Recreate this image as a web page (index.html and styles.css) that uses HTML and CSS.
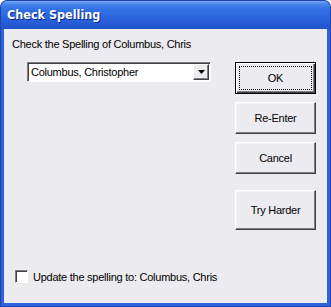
FILE: index.html
```html
<!DOCTYPE html>
<html>
<head>
<meta charset="utf-8">
<link rel="stylesheet" href="styles.css">
</head>
<body>
<div class="window">
  <div class="titlebar"><span class="title">Check Spelling</span></div>
  <div class="frame">
    <div class="content">
      <div class="left">
        <div class="prompt">Check the Spelling of Columbus, Chris</div>
        <div class="combo">
          <span class="combo-text">Columbus, Christopher</span>
          <span class="combo-btn"><svg width="7" height="4" viewBox="0 0 7 4"><path d="M0 0H7L3.5 4Z" fill="#000"/></svg></span>
        </div>
        <label class="check">
          <span class="box"></span>
          <span class="check-label">Update the spelling to: Columbus, Chris</span>
        </label>
      </div>
      <div class="buttons">
        <button class="btn default"><span class="focus">OK</span></button>
        <button class="btn">Re-Enter</button>
        <button class="btn">Cancel</button>
        <button class="btn tall">Try Harder</button>
      </div>
    </div>
  </div>
</div>
</body>
</html>
```
FILE: styles.css
```css
html, body {
  margin: 0;
  padding: 0;
  background: #ffffff;
}
.window {
  width: 331px;
  height: 307px;
  display: flex;
  flex-direction: column;
  font-family: "Liberation Sans", Arial, sans-serif;
  font-size: 11px;
  letter-spacing: -0.25px;
  color: #000;
  white-space: nowrap;
}
.titlebar {
  height: 29px;
  box-sizing: border-box;
  border-radius: 7px 7px 0 0;
  background: linear-gradient(to bottom, #7aaaf4 0px, #4a88ec 3px, #3272e4 8px, #2a62dc 18px, #2456d0 26px, #2050c8 29px);
  border: 1px solid #1d43b0;
  border-bottom: none;
  display: flex;
  align-items: center;
  padding-left: 6px;
}
.title {
  color: #fff;
  font-family: "DejaVu Sans Condensed", "DejaVu Sans", sans-serif;
  font-weight: bold;
  font-size: 12.5px;
  letter-spacing: 0;
  text-shadow: 1px 1px 0 #0f2a80;
  margin-top: -1px;
}
.frame {
  flex: 1;
  background: #2f62dc;
  border-left: 1px solid #1d43b0;
  border-right: 1px solid #1d43b0;
  border-bottom: 1px solid #1d43b0;
  padding: 0 3px 3px 3px;
  display: flex;
}
.content {
  flex: 1;
  background: #ecebef;
  display: flex;
  justify-content: space-between;
}
.left {
  display: flex;
  flex-direction: column;
  padding: 8px 0 0 8px;
}
.prompt {
  line-height: 14px;
  height: 14px;
}
.combo {
  margin: 11px 0 0 15px;
  width: 184px;
  height: 20px;
  box-sizing: border-box;
  border: 1px solid;
  border-color: #808080 #ffffff #ffffff #808080;
  box-shadow: inset 1px 1px 0 #404040;
  background: #fff;
  display: flex;
  align-items: center;
  justify-content: space-between;
}
.combo-text {
  padding-left: 3px;
  line-height: 16px;
}
.combo-btn {
  width: 16px;
  height: 16px;
  margin-right: 1px;
  box-sizing: border-box;
  background: #ecebef;
  border: 1px solid;
  border-color: #ffffff #404040 #404040 #ffffff;
  box-shadow: inset -1px -1px 0 #808080;
  display: flex;
  align-items: center;
  justify-content: center;
}
.check {
  margin-top: auto;
  margin-bottom: 20px;
  margin-left: 3px;
  display: flex;
  align-items: center;
}
.box {
  width: 13px;
  height: 13px;
  box-sizing: border-box;
  border: 1px solid;
  border-color: #808080 #ffffff #ffffff #808080;
  box-shadow: inset 1px 1px 0 #404040;
  background: #fff;
}
.check-label {
  margin-left: 5px;
}
.buttons {
  display: flex;
  flex-direction: column;
  padding: 33px 11px 0 0;
}
.btn {
  width: 81px;
  height: 32px;
  margin-bottom: 8px;
  box-sizing: border-box;
  font: inherit;
  letter-spacing: inherit;
  color: #000;
  background: #ecebef;
  border: 1px solid;
  border-color: #ffffff #404040 #404040 #ffffff;
  box-shadow: inset -1px -1px 0 #808080, inset 1px 1px 0 #f4f4f4;
  padding: 0;
  display: flex;
  align-items: center;
  justify-content: center;
}
.btn.default {
  border: 1px solid #000;
  box-shadow: inset 1px 1px 0 #ffffff, inset -1px -1px 0 #404040, inset -2px -2px 0 #808080;
  padding: 3px;
}
.focus {
  flex: 1;
  align-self: stretch;
  border: 1px dotted #000;
  display: flex;
  align-items: center;
  justify-content: center;
}
.btn.tall {
  height: 40px;
  margin-top: 8px;
}
```
